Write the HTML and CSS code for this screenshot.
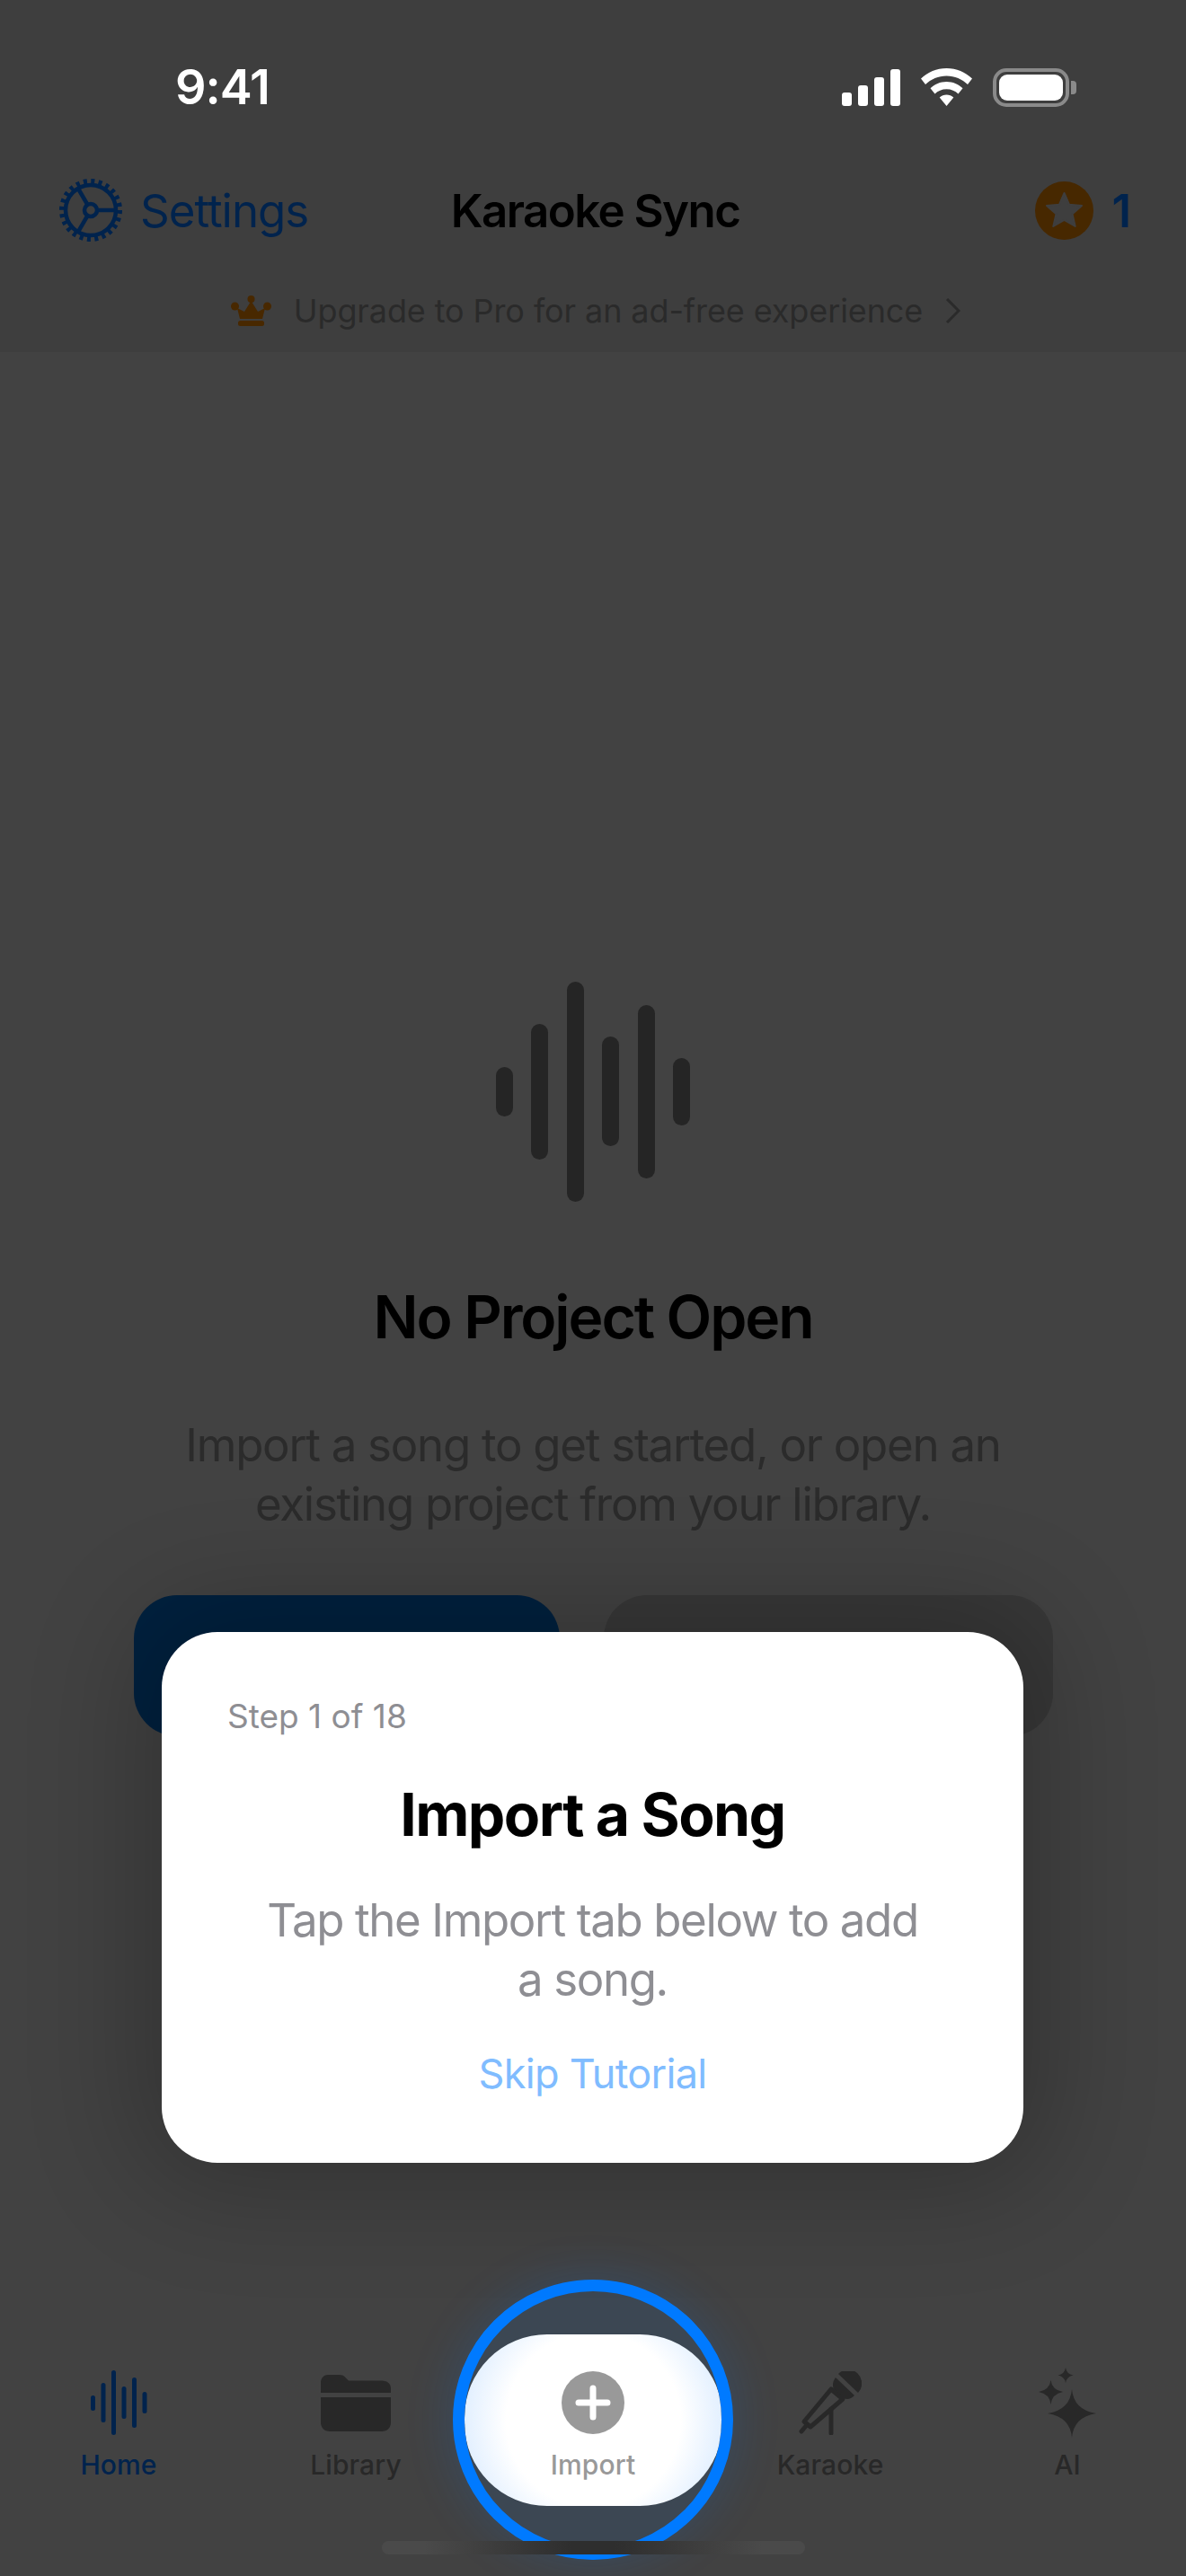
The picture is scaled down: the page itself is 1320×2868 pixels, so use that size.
FILE: index.html
```html
<!DOCTYPE html>
<html lang="en">
<head>
    <meta charset="UTF-8">
    <meta name="viewport" content="width=device-width, initial-scale=1.0">
    <title>Karaoke Sync</title>
    <link rel="stylesheet" href="styles.css">
</head>
<body>
    <div class="top">
        <div class="status-bar">
            <div class="time">9:41</div>
            <div class="status-icons">
                <svg class="signal" width="65" height="41" viewBox="0 0 65 41">
                    <rect x="0" y="26" width="11" height="15" rx="3"/>
                    <rect x="18" y="18" width="11" height="23" rx="3"/>
                    <rect x="36" y="9" width="11" height="32" rx="3"/>
                    <rect x="54" y="0" width="11" height="41" rx="3"/>
                </svg>
                <svg class="wifi" width="57" height="42" viewBox="0 0 57 42">
                    <path d="M28.5 0C39.5 0 49.5 4.3 57 11.6L52 18C45.8 12 37.6 8.4 28.5 8.4S11.200 12 5 18L0 11.600C7.500 4.300 17.500 0 28.500 0Z"/>
                    <path d="M28.500 15C35.500 15 41.800 17.800 46.500 22.300L41.500 28.500C38.200 25.300 33.600 23.300 28.500 23.300S18.800 25.300 15.500 28.500L10.500 22.300C15.200 17.800 21.500 15 28.500 15Z"/>
                    <path d="M28.500 29.500C31.500 29.500 34.200 30.600 36.300 32.500L28.500 42L20.700 32.500C22.800 30.600 25.500 29.500 28.500 29.500Z"/>
                </svg>
                <div class="battery">
                    <div class="battery-body"><div class="battery-fill"></div></div>
                    <div class="battery-nub"></div>
                </div>
            </div>
        </div>
        <div class="nav-bar">
            <div class="settings">
                <svg class="gear" width="70" height="70" viewBox="0 0 70 70">
                    <circle class="gear-teeth" cx="35" cy="35" r="32"/>
                    <circle class="gear-line" cx="35" cy="35" r="28"/>
                    <circle class="gear-line" cx="35" cy="35" r="7"/>
                    <path class="gear-line" d="M42 35H63M31.500 29L21 11M31.500 41L21 59"/>
                </svg>
                <span>Settings</span>
            </div>
            <div class="app-title">Karaoke Sync</div>
            <div class="credits">
                <svg width="65" height="65" viewBox="0 0 65 65">
                    <circle cx="32.500" cy="32.500" r="32.500" fill="#472800"/>
                    <path class="credit-star" d="M32.500 13L38.100 25.800L52 27L41.500 36.200L44.700 50L32.500 42.800L20.300 50L23.500 36.200L13 27L26.900 25.800Z"/>
                </svg>
                <span>1</span>
            </div>
        </div>
        <div class="upgrade-row">
            <svg width="45" height="34" viewBox="0 0 45 34" fill="#482800">
                <circle cx="22.500" cy="4" r="4"/>
                <circle cx="4.500" cy="12" r="4.500"/>
                <circle cx="40.500" cy="12" r="4.500"/>
                <path d="M7 14L15 18L22.500 6L30 18L38 14L35 26H10Z"/>
                <rect x="8" y="28" width="29" height="6" rx="2.500"/>
            </svg>
            <span class="upgrade-text">Upgrade to Pro for an ad-free experience</span>
            <svg class="chevron" width="17" height="28" viewBox="0 0 17 28">
                <path d="M2 1L15 14L2 27"/>
            </svg>
        </div>
    </div>

    <div class="main">
        <svg class="wave" width="216" height="245" viewBox="0 0 216 245">
            <rect x="0" y="95" width="19" height="55" rx="9.500"/>
            <rect x="39" y="47" width="19" height="151" rx="9.500"/>
            <rect x="79" y="0" width="19" height="245" rx="9.500"/>
            <rect x="118" y="61" width="19" height="122" rx="9.500"/>
            <rect x="158" y="26" width="19" height="193" rx="9.500"/>
            <rect x="197" y="85" width="19" height="75" rx="9.500"/>
        </svg>
        <h1 class="empty-title">No Project Open</h1>
        <p class="empty-text">Import a song to get started, or open an<br>existing project from your library.</p>
        <div class="actions">
            <div class="action action-primary"></div>
            <div class="action action-secondary"></div>
        </div>
    </div>

    <div class="tab-bar">
        <div class="tab tab-active">
            <div class="tab-icon">
                <svg width="63" height="72" viewBox="0 0 63 72" fill="#00234d">
                    <rect x="0" y="28" width="5" height="17" rx="2.500"/>
                    <rect x="11.500" y="14" width="5" height="44" rx="2.500"/>
                    <rect x="23" y="0" width="5" height="72" rx="2.500"/>
                    <rect x="34.500" y="18" width="5" height="36" rx="2.500"/>
                    <rect x="46" y="8" width="5" height="56" rx="2.500"/>
                    <rect x="57.500" y="24" width="5" height="24" rx="2.500"/>
                </svg>
            </div>
            <div class="tab-label">Home</div>
        </div>
        <div class="tab">
            <div class="tab-icon">
                <svg width="78" height="63" viewBox="0 0 78 63" fill="#282828">
                    <path d="M0 20V9C0 4 3 0 8 0H20C24 0 26 1 28 3.500L31 6.500H68C74 6.500 78 10 78 15V20Z"/>
                    <path d="M0 25H78V53C78 59 74 63 68 63H10C4 63 0 59 0 53Z"/>
                </svg>
            </div>
            <div class="tab-label">Library</div>
        </div>
        <div class="tab tab-import">
            <div class="ring"><div class="ring-fill"></div></div>
            <div class="tab-icon">
                <svg width="70" height="70" viewBox="0 0 70 70">
                    <circle cx="35" cy="35" r="35" fill="#999"/>
                    <path class="plus" d="M35 19V51M19 35H51"/>
                </svg>
            </div>
            <div class="tab-label">Import</div>
        </div>
        <div class="tab">
            <div class="tab-icon">
                <svg width="70" height="71" viewBox="0 0 70 71">
                    <path class="mic-fill" d="M44 3A15 15 0 0 1 66 24Z"/>
                    <path class="mic-fill" d="M41 7L62 27C58 31 54 32 50 30L39 20C37 16 38 11 41 7Z"/>
                    <path class="mic-line" d="M36 20L49 31L13 62L6 56Z"/>
                    <path class="mic-line" d="M36 42V69M8 61L3 67"/>
                </svg>
            </div>
            <div class="tab-label">Karaoke</div>
        </div>
        <div class="tab">
            <div class="tab-icon">
                <svg width="64" height="78" viewBox="0 0 64 78" fill="#282828">
                    <path d="M37 24Q39 47 64 51Q39 55 37 78Q35 55 10 51Q35 47 37 24Z"/>
                    <path d="M13.500 14Q15 25 27 27Q15 29 13.500 41Q12 29 0 27Q12 25 13.500 14Z"/>
                    <path d="M30 0Q31 7 38.500 8.500Q31 10 30 17Q29 10 21.500 8.500Q29 7 30 0Z"/>
                </svg>
            </div>
            <div class="tab-label">AI</div>
        </div>
        <div class="home-indicator"></div>
    </div>

    <div class="tutorial-card">
        <div class="step">Step 1 of 18</div>
        <div class="card-title">Import a Song</div>
        <div class="card-text">Tap the Import tab below to add<br>a song.</div>
        <div class="skip">Skip Tutorial</div>
    </div>
</body>
</html>
```

FILE: styles.css
```css
* {
    box-sizing: border-box;
}
body {
    display: flex;
    flex-direction: column;
    width: 1320px;
    height: 2868px;
    margin: 0;
    overflow: hidden;
    position: relative;
    background-color: #424242;
    font-family: Inter, "Liberation Sans", sans-serif;
    color: #000;
}
svg {
    display: block;
}

/* top area */
.top {
    background-color: #3e3e3e;
    height: 392px;
}
.status-bar {
    display: flex;
    justify-content: space-between;
    align-items: center;
    height: 168px;
    padding: 26px 122px 0 195px;
}
.time {
    font-size: 54px;
    font-weight: 600;
    line-height: 60px;
    letter-spacing: -1px;
    color: #fff;
}
.status-icons {
    display: flex;
    align-items: center;
    gap: 23px;
    fill: #fff;
}
.battery {
    display: flex;
    align-items: center;
    gap: 2px;
}
.battery-body {
    width: 85px;
    height: 43px;
    padding: 3px;
    border: 4px solid #8a8a8a;
    border-radius: 15px;
}
.battery-fill {
    width: 100%;
    height: 100%;
    border-radius: 9px;
    background-color: #fff;
}
.battery-nub {
    width: 6px;
    height: 15px;
    border-radius: 0 4px 4px 0;
    background-color: #8a8a8a;
}
.nav-bar {
    display: grid;
    grid-template-columns: 1fr auto 1fr;
    align-items: center;
    height: 136px;
    padding: 0 61px 4px 66px;
}
.settings {
    display: flex;
    align-items: center;
    gap: 20px;
    font-size: 51px;
    letter-spacing: -1px;
    color: #00234d;
}
.gear-teeth {
    fill: none;
    stroke: #00234d;
    stroke-width: 6;
    stroke-dasharray: 4 4.380;
}
.gear-line {
    fill: none;
    stroke: #00234d;
    stroke-width: 4.500;
}
.app-title {
    font-size: 51px;
    font-weight: 600;
    letter-spacing: -1.550px;
}
.credits {
    display: flex;
    align-items: center;
    justify-content: flex-end;
    gap: 20px;
    font-size: 51px;
    font-weight: 600;
    color: #00234d;
}
.credit-star {
    fill: #3e3e3e;
    stroke: #3e3e3e;
    stroke-width: 2;
    stroke-linejoin: round;
}
.upgrade-row {
    display: flex;
    justify-content: center;
    align-items: center;
    height: 88px;
    gap: 25px;
    padding: 0 0 4px 6px;
}
.upgrade-text {
    font-size: 36px;
    letter-spacing: -0.1px;
    color: #2a2a2a;
}
.chevron path {
    fill: none;
    stroke: #2a2a2a;
    stroke-width: 3;
}

/* empty state */
.main {
    flex: 1;
    display: flex;
    flex-direction: column;
    align-items: center;
    justify-content: center;
    text-align: center;
}
.wave {
    fill: #252525;
}
.empty-title {
    margin: 88px 0 0;
    font-size: 66px;
    font-weight: 600;
    line-height: 80px;
    letter-spacing: -2.100px;
}
.empty-text {
    margin: 70px 0 0;
    font-size: 51px;
    line-height: 66px;
    letter-spacing: -1.270px;
    color: #2b2b2b;
}
.actions {
    display: flex;
    gap: 49px;
    margin-top: 68px;
}
.action {
    height: 157px;
    border-radius: 48px;
}
.action-primary {
    width: 474px;
    background-color: #00213f;
}
.action-secondary {
    width: 500px;
    background-color: #383838;
}

/* tabs */
.tab-bar {
    display: grid;
    grid-template-columns: repeat(5, 1fr);
    height: 234px;
    position: relative;
}
.tab {
    display: flex;
    flex-direction: column;
    align-items: center;
    position: relative;
}
.tab-icon {
    display: flex;
    justify-content: center;
    align-items: center;
    height: 82px;
    position: relative;
}
.tab-label {
    margin-top: 8px;
    font-size: 30px;
    font-weight: 500;
    line-height: 40px;
    letter-spacing: 0.1px;
    color: #282828;
    position: relative;
}
.tab-active .tab-label {
    color: #00234d;
}
.tab-import .tab-label {
    color: #999;
}
.plus {
    fill: none;
    stroke: #fff;
    stroke-width: 7;
    stroke-linecap: round;
}
.mic-fill {
    fill: #282828;
}
.mic-line {
    fill: none;
    stroke: #282828;
    stroke-width: 5;
    stroke-linecap: round;
    stroke-linejoin: round;
}

/* highlight around the import tab */
.ring {
    display: flex;
    justify-content: center;
    align-items: center;
    position: absolute;
    left: -24px;
    top: -96px;
    width: 312px;
    height: 312px;
    border: 13px solid #007aff;
    border-radius: 50%;
    overflow: hidden;
    background-color: #3c4753;
    box-shadow: 0 0 50px 6px rgba(0, 122, 255, 0.14);
}
.ring-fill {
    flex: none;
    width: 287px;
    height: 191px;
    border-radius: 92px;
    background: radial-gradient(circle 143px at center, #fff 68%, #e3f0ff 100%);
}
.home-indicator {
    position: absolute;
    left: 425px;
    top: 195px;
    width: 471px;
    height: 15px;
    border-radius: 8px;
    background: linear-gradient(90deg, #4a4a4a 0%, #4a4a4a 10%, #2e2e2e 45%, #2e2e2e 55%, #4a4a4a 90%, #4a4a4a 100%);
}

/* tutorial card */
.tutorial-card {
    position: absolute;
    left: 180px;
    top: 1817px;
    width: 959px;
    height: 591px;
    padding: 70px 73px 0;
    border-radius: 62px;
    background-color: #fff;
    box-shadow: 0 0 120px 30px rgba(0, 0, 0, 0.22);
    text-align: center;
}
.step {
    font-size: 37px;
    line-height: 48px;
    color: #8e8e93;
    text-align: left;
}
.card-title {
    margin-top: 45px;
    font-size: 66px;
    font-weight: 700;
    line-height: 80px;
    letter-spacing: -1.600px;
}
.card-text {
    margin-top: 45px;
    font-size: 51px;
    line-height: 66px;
    letter-spacing: -1.400px;
    color: #8e8e93;
}
.skip {
    margin-top: 42px;
    font-size: 45px;
    line-height: 60px;
    letter-spacing: -0.7px;
    color: #80bcff;
}
```
